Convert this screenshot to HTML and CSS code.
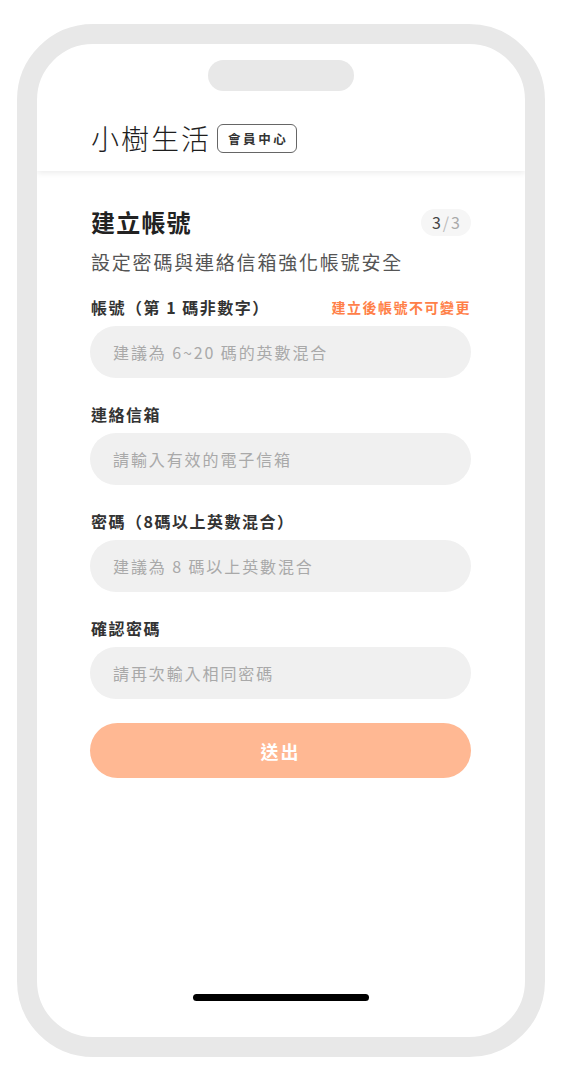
FILE: index.html
```html
<!DOCTYPE html>
<html lang="zh-Hant">
<head>
<meta charset="utf-8">
<title>小樹生活 - 建立帳號</title>
<link rel="stylesheet" href="styles.css">
</head>
<body>
<div class="phone">
  <div class="screen">
    <header class="header">
      <div class="notch"></div>
      <div class="brand">
        <span class="brand-name">小樹生活</span>
        <span class="badge">會員中心</span>
      </div>
    </header>
    <main class="content">
      <div class="title-row">
        <h1 class="title">建立帳號</h1>
        <span class="step"><b>3</b><span class="step-sep">/</span>3</span>
      </div>
      <p class="subtitle">設定密碼與連絡信箱強化帳號安全</p>

      <div class="field first">
        <div class="label-row">
          <label class="label">帳號（第 1 碼非數字）</label>
          <span class="hint">建立後帳號不可變更</span>
        </div>
        <div class="input">建議為 6~20 碼的英數混合</div>
      </div>

      <div class="field">
        <div class="label-row"><label class="label">連絡信箱</label></div>
        <div class="input">請輸入有效的電子信箱</div>
      </div>

      <div class="field">
        <div class="label-row"><label class="label">密碼（8碼以上英數混合）</label></div>
        <div class="input">建議為 8 碼以上英數混合</div>
      </div>

      <div class="field">
        <div class="label-row"><label class="label">確認密碼</label></div>
        <div class="input">請再次輸入相同密碼</div>
      </div>

      <button class="submit" type="button">送出</button>
    </main>
    <div class="home-bar"></div>
  </div>
</div>
</body>
</html>
```

FILE: styles.css
```css
* { box-sizing: border-box; }

html, body {
  margin: 0;
  padding: 0;
  background: #ffffff;
}

body {
  font-family: "Noto Sans CJK TC", "Noto Sans", sans-serif;
  color: #222;
  padding: 24px 0 0 17px;
}

.phone {
  width: 528px;
  height: 1033px;
  border: 20px solid #e8e8e8;
  border-radius: 76px;
  background: #fff;
}

.screen {
  height: 100%;
  border-radius: 56px;
  overflow: hidden;
  display: flex;
  flex-direction: column;
}

.header {
  padding: 16px 0 18px 54px;
  box-shadow: 0 2px 6px rgba(0, 0, 0, 0.08);
  position: relative;
  z-index: 1;
}

.notch {
  width: 146px;
  height: 31px;
  border-radius: 16px;
  background: #e8e8e8;
  margin: 0 0 0 117px;
}

.brand {
  margin-top: 33px;
  height: 29px;
  display: flex;
  align-items: center;
}

.brand-name {
  font-size: 28px;
  font-weight: 300;
  letter-spacing: 2px;
  color: #1e1e1e;
  line-height: 29px;
}

.badge {
  margin-left: 6px;
  height: 29px;
  padding: 0 8px 0 10px;
  border: 1.5px solid #666;
  border-radius: 6px;
  font-size: 12.5px;
  font-weight: 700;
  letter-spacing: 2.6px;
  color: #333;
  display: flex;
  align-items: center;
}

.content {
  padding: 0 54px 0 53px;
}

.title-row {
  margin-top: 37px;
  height: 28px;
  display: flex;
  align-items: center;
  justify-content: space-between;
}

.title {
  margin: 0 0 0 1px;
  font-size: 24px;
  line-height: 28px;
  font-weight: 700;
  letter-spacing: 1.2px;
  color: #222;
}

.step {
  height: 27px;
  padding: 0 10px 0 11px;
  border-radius: 14px;
  background: #f6f6f6;
  font-size: 16px;
  color: #aaa;
  display: flex;
  align-items: center;
  letter-spacing: 1px;
}

.step b {
  font-weight: 400;
  color: #444;
}

.step-sep {
  margin: 0 1px;
  color: #bbb;
}

.subtitle {
  margin: 13px 0 0 1px;
  font-size: 19px;
  line-height: 26px;
  letter-spacing: 1.8px;
  color: #555;
}

.field {
  margin-top: 25px;
}

.field.first {
  margin-top: 21px;
}

.label-row {
  height: 22px;
  display: flex;
  align-items: center;
  justify-content: space-between;
  padding-left: 1px;
}

.label {
  font-size: 16px;
  font-weight: 700;
  letter-spacing: 1.5px;
  color: #333;
}

.hint {
  font-size: 14px;
  font-weight: 700;
  letter-spacing: 1.5px;
  color: #ff8048;
}

.input {
  margin-top: 8px;
  height: 52px;
  border-radius: 26px;
  background: #f0f0f0;
  padding: 0 22px 0 23px;
  display: flex;
  align-items: center;
  font-size: 16px;
  letter-spacing: 1.9px;
  color: #a9a9a9;
}

.submit {
  margin-top: 24px;
  width: 100%;
  height: 55px;
  border: 0;
  border-radius: 28px;
  background: #ffb893;
  color: #fff;
  font-family: "Noto Sans CJK TC", "Noto Sans", sans-serif;
  font-size: 18px;
  font-weight: 700;
  letter-spacing: 2px;
  display: block;
}

.home-bar {
  margin: auto auto 36px;
  width: 176px;
  height: 7px;
  border-radius: 4px;
  background: #000;
}
```
